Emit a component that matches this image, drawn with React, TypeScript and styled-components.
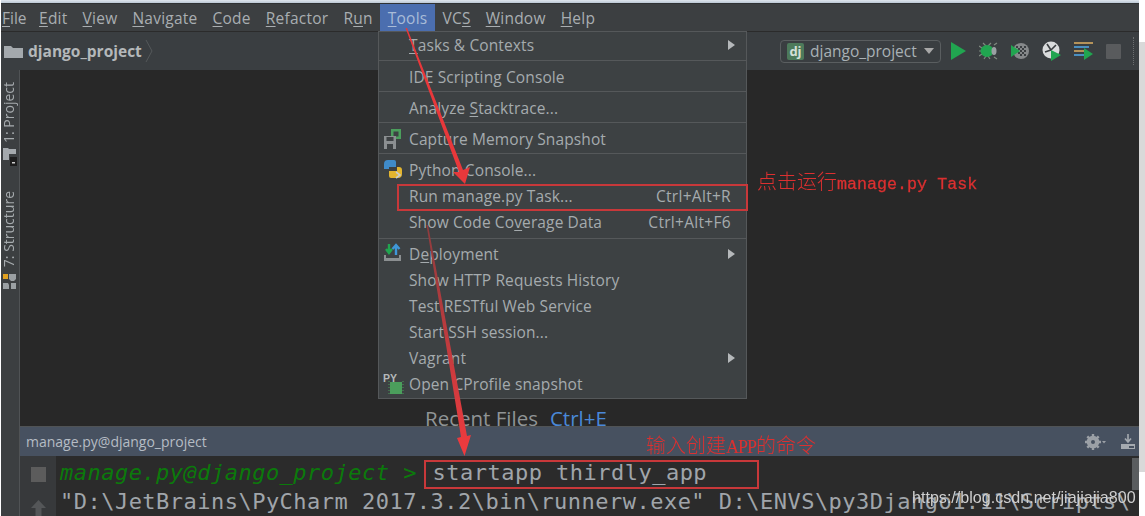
import React from 'react';
import styled, { createGlobalStyle } from 'styled-components';

const uiFont = `"Open Sans", "Noto Sans", sans-serif`;
const cjkFont = `"Noto Sans CJK SC", sans-serif`;

const GlobalStyle = createGlobalStyle`
  html, body {
    margin: 0;
    padding: 0;
    background: #fff;
    overflow: hidden;
  }
`;

// Page frame
const Page = styled.div`
  position: relative;
  display: flex;
  width: 1145px;
  height: 516px;
  overflow: hidden;
  filter: blur(0.45px);
  font-family: ${uiFont};
`;

const Window = styled.div`
  display: flex;
  flex-direction: column;
  width: 1138px;
  margin-left: 1px;
  height: 516px;
  background: #3c3f41;
`;

const RightEdge = styled.div`
  display: flex;
  flex-direction: column;
  width: 6px;
  padding-top: 42px;
  background: #fff;
`;

const RightEdgeGrey = styled.div`
  height: 430px;
  background: #d9d9d9;
`;

const TopEdge = styled.div`
  height: 4px;
  background: linear-gradient(#dfe6ee, #bcc8d4);
  border-bottom: 1px solid #2f3234;
  box-sizing: border-box;
`;

// Menu bar
const MenuBar = styled.div`
  display: flex;
  height: 27px;
  background: #3c3f41;
  border-bottom: 1px solid #2b2b2b;
`;

const MenuItem = styled.div<{ $active?: boolean }>`
  display: flex;
  align-items: center;
  padding: 0 7.5px;
  height: 27px;
  font-size: 15.5px;
  letter-spacing: 0.24px;
  color: ${(p) => (p.$active ? '#a9bcd8' : '#a9aeb1')};
  background: ${(p) => (p.$active ? '#4b6eaf' : 'transparent')};
  white-space: pre;
  &:first-child {
    padding-left: 1px;
    padding-right: 5px;
    letter-spacing: 0;
  }
`;

const Key = styled.span`
  text-decoration: underline;
  text-underline-offset: 2px;
  text-decoration-thickness: 1px;
`;

// Navigation bar
const NavBar = styled.div`
  display: flex;
  align-items: center;
  height: 38px;
  padding: 0 4px 0 3px;
  background: #3a3e41;
`;

const Crumb = styled.span`
  margin-left: 5px;
  font-size: 15.5px;
  font-weight: 700;
  color: #b4b8ba;
`;

const RunConfig = styled.div`
  display: flex;
  align-items: center;
  width: 161px;
  height: 23px;
  box-sizing: border-box;
  margin-left: auto;
  padding: 0 6px;
  border: 1px solid #5a5e60;
  border-radius: 4px;
  font-size: 15.5px;
  color: #a9b1b5;
`;

const DjBadge = styled.span`
  display: flex;
  align-items: center;
  justify-content: center;
  width: 17px;
  height: 17px;
  margin-right: 6px;
  border-radius: 2px;
  background: #4d7a5b;
  color: #d5e0d8;
  font-size: 13px;
  font-weight: 700;
`;

const Caret = styled.span`
  margin-left: auto;
  width: 0;
  height: 0;
  border-left: 5px solid transparent;
  border-right: 5px solid transparent;
  border-top: 6px solid #a8a8a8;
`;

const Toolbar = styled.div`
  display: flex;
  align-items: center;
  gap: 13px;
  margin-left: 10px;
  margin-right: 12px;
`;

const Grip = styled.div`
  width: 1px;
  height: 28px;
  border-left: 1px dotted #6b6e70;
`;

// Main area
const Body = styled.div`
  display: flex;
  flex: 1;
  min-height: 0;
`;

const SideBar = styled.div`
  display: flex;
  flex-direction: column;
  align-items: center;
  width: 19px;
  padding: 12px 3px 0 0;
  box-sizing: border-box;
  background: #3c3f41;
  border-right: 1px solid #505355;
`;

const SideLabel = styled.div<{ $gap: number }>`
  writing-mode: vertical-rl;
  transform: rotate(180deg);
  font-size: 14px;
  line-height: 16px;
  color: #a6abae;
  margin-top: ${(p) => p.$gap}px;
  white-space: nowrap;
`;

const Main = styled.div`
  display: flex;
  flex-direction: column;
  flex: 1;
  min-width: 0;
`;

const Editor = styled.div`
  display: flex;
  flex: 1;
  align-items: flex-end;
  padding: 0 0 0 405px;
  background: #282828;
  border-bottom: 1px solid #505355;
`;

const Hint = styled.div`
  font-size: 20.5px;
  line-height: 24px;
  margin-bottom: -4px;
  color: #909496;
`;

const HintKey = styled.span`
  margin-left: 12px;
  color: #4a88d8;
`;

// Bottom tool window
const PanelHeader = styled.div`
  display: flex;
  align-items: center;
  height: 29px;
  padding: 0 4px 0 6px;
  background: #475160;
  font-size: 14px;
  color: #b5bcc4;
`;

const PanelTitle = styled.span`
  flex: 1;
`;

const PanelIcons = styled.div`
  display: flex;
  align-items: center;
  gap: 15px;
`;

const Console = styled.div`
  display: flex;
  height: 60px;
  background: #2b2b2b;
  overflow: hidden;
`;

const Gutter = styled.div`
  display: flex;
  flex-direction: column;
  align-items: center;
  gap: 18px;
  width: 36px;
  padding-top: 11px;
  box-sizing: border-box;
  background: #37393b;
`;

const StopSquare = styled.div`
  width: 15px;
  height: 15px;
  background: #5c5c5c;
`;

const Output = styled.div`
  flex: 1;
  min-width: 0;
  padding: 2px 0 0 4px;
  font-family: "DejaVu Sans Mono", monospace;
  font-size: 22px;
  line-height: 29px;
  letter-spacing: 0.48px;
  white-space: pre;
  color: #a0a5aa;
  overflow: hidden;
`;

const Prompt = styled.span`
  color: #0b7a0b;
  font-style: italic;
`;

const Command = styled.span`
  margin-left: 2px;
`;

const Scrollbar = styled.div`
  width: 7px;
  height: 32px;
  margin-top: 2px;
  background: #5a5d5f;
`;

// Tools menu
const Menu = styled.div`
  position: absolute;
  left: 378px;
  top: 31px;
  width: 369px;
  box-sizing: border-box;
  background: #3d4143;
  border: 1px solid #55585a;
  font-size: 15.5px;
  letter-spacing: 0.12px;
  color: #a5abae;
`;

const Group = styled.div<{ $pad?: string }>`
  padding: ${(p) => p.$pad || '3px 0 1px'};
  border-bottom: 1px solid #55585a;
  &:last-child {
    border-bottom: 0;
  }
`;

const Row = styled.div`
  position: relative;
  display: flex;
  align-items: center;
  height: 26px;
  padding: 0 15px 0 30px;
  white-space: pre;
`;

const RowIcon = styled.span`
  position: absolute;
  left: 4px;
  top: 2px;
  display: flex;
`;

const Shortcut = styled.span`
  margin-left: auto;
  letter-spacing: 0.3px;
`;

const SubArrow = styled.span`
  margin-left: auto;
  margin-right: -4px;
  width: 0;
  height: 0;
  border-top: 5.5px solid transparent;
  border-bottom: 5.5px solid transparent;
  border-left: 7px solid #b5b8ba;
`;

// Annotations painted over the screenshot
const Overlay = styled.svg`
  position: absolute;
  left: 0;
  top: 0;
  pointer-events: none;
`;

const RedBox = styled.div<{ $l: number; $t: number; $w: number; $h: number }>`
  position: absolute;
  left: ${(p) => p.$l}px;
  top: ${(p) => p.$t}px;
  width: ${(p) => p.$w}px;
  height: ${(p) => p.$h}px;
  box-sizing: border-box;
  border: 2px solid #c8383a;
`;

const Note = styled.div<{ $l: number; $t: number }>`
  position: absolute;
  left: ${(p) => p.$l}px;
  top: ${(p) => p.$t}px;
  display: flex;
  align-items: baseline;
  font-family: ${cjkFont};
  font-size: 20px;
  line-height: 26px;
  font-weight: 300;
  color: #dc3030;
  white-space: pre;
`;

const NoteMono = styled.span`
  font-family: "Liberation Mono", monospace;
  font-size: 16.7px;
  -webkit-text-stroke: 0.3px #dc3030;
`;

const NoteSerif = styled.span`
  font-family: "Liberation Serif", serif;
  font-size: 18px;
  letter-spacing: -1px;
`;

const Watermark = styled.div`
  position: absolute;
  left: 912px;
  top: 487px;
  font-family: "Liberation Sans", sans-serif;
  font-size: 16.1px;
  line-height: 20px;
  color: #cfcfcf;
  white-space: pre;
`;

// Drawn icons
const FolderIcon = () => (
  <svg width="19" height="13" viewBox="0 0 19 13">
    <path d="M0 1h7l2 2h10v10H0z" fill="#a4a9ad" />
  </svg>
);

const Chevron = () => (
  <svg width="8" height="24" viewBox="0 0 8 24" style={{ marginLeft: 3 }}>
    <path d="M1 1l6 11-6 11" fill="none" stroke="#54585a" strokeWidth="1" />
  </svg>
);

const PlayIcon = () => (
  <svg width="15" height="18" viewBox="0 0 15 18">
    <path d="M0 0l15 9-15 9z" fill="#21a550" />
  </svg>
);

const DebugIcon = () => (
  <svg width="19" height="18" viewBox="0 0 19 18">
    <g stroke="#7f8a80" strokeWidth="1.2" fill="none">
      <path d="M4 1l3 3M12 1l-3 3M0 9h3M0 4l3 2M0 14l3-2M5 17l2-3M11 17l-2-3M15 3l3-2M15 15l3 2" />
    </g>
    <ellipse cx="8" cy="9" rx="6.5" ry="6" fill="#21a550" />
    <path d="M12 5a5 5 0 0 1 0 8 5 5 0 0 0 0-8z" fill="#c9cccd" />
    <ellipse cx="15" cy="9" rx="2.5" ry="4" fill="#9aa0a3" />
  </svg>
);

const CoverageIcon = () => (
  <svg width="18" height="18" viewBox="0 0 18 18">
    <circle cx="10" cy="9" r="8" fill="#85888a" />
    <g fill="#3a3e41">
      <rect x="5" y="4" width="2" height="2" />
      <rect x="9" y="4" width="2" height="2" />
      <rect x="13" y="4" width="2" height="2" />
      <rect x="7" y="6" width="2" height="2" />
      <rect x="11" y="6" width="2" height="2" />
      <rect x="9" y="8" width="2" height="2" />
      <rect x="13" y="8" width="2" height="2" />
      <rect x="7" y="10" width="2" height="2" />
      <rect x="11" y="10" width="2" height="2" />
      <rect x="9" y="12" width="2" height="2" />
      <rect x="13" y="12" width="2" height="2" />
    </g>
    <path d="M0 3l9 6-9 6z" fill="#21a550" />
  </svg>
);

const ProfileIcon = () => (
  <svg width="19" height="20" viewBox="0 0 19 20">
    <circle cx="9" cy="9" r="8.5" fill="#d9dbdc" />
    <path d="M9 9L5 3M9 9l-6 2M9 9l5-5" stroke="#3a3e41" strokeWidth="1.6" />
    <path d="M9 9l0 11 10-6z" fill="#21a550" />
  </svg>
);

const ConcurrencyIcon = () => (
  <svg width="19" height="18" viewBox="0 0 19 18">
    <rect x="0" y="0" width="19" height="2" fill="#b5935a" />
    <rect x="0" y="4" width="15" height="2" fill="#4a8fc0" />
    <rect x="0" y="8" width="11" height="2" fill="#b5935a" />
    <rect x="0" y="12" width="11" height="2" fill="#4a8fc0" />
    <path d="M10 6l9 6-9 6z" fill="#21a550" />
  </svg>
);

const StopIcon = () => (
  <svg width="15" height="15" viewBox="0 0 15 15">
    <rect width="15" height="15" rx="1" fill="#595b5d" />
  </svg>
);

const ProjectToolIcon = () => (
  <svg width="15" height="18" viewBox="0 0 15 18" style={{ marginTop: 5, marginLeft: 3 }}>
    <path d="M0 0h5l1 1h7v5H6v6H0z" fill="#a4a9ad" />
    <rect x="7" y="9" width="7" height="9" fill="#1d1d1d" />
    <rect x="9" y="14" width="3" height="1.5" fill="#ccc" />
  </svg>
);

const StructureToolIcon = () => (
  <svg width="14" height="15" viewBox="0 0 14 15" style={{ marginTop: 7, marginLeft: 3 }}>
    <rect x="0" y="0" width="5" height="5" fill="#e0a020" />
    <path d="M6 0h7v5l-2 2H8L6 5zM0 9h5l1 2v4H0zM8 9h5v6H8z" fill="#9ba0a3" />
  </svg>
);

const SnapshotIcon = () => (
  <svg width="20" height="22" viewBox="0 0 20 22">
    <rect x="8" y="1" width="10" height="10" fill="#4b9e5c" />
    <rect x="10.5" y="3.5" width="5" height="5" fill="#3d4143" />
    <path d="M1 8h12v13H1z" fill="#8b8f91" />
    <rect x="3.5" y="9" width="7" height="4" fill="#3d4143" />
    <rect x="4" y="16" width="6" height="5" fill="#3d4143" />
  </svg>
);

const PythonIcon = () => (
  <svg width="20" height="20" viewBox="0 0 20 20">
    <path d="M5 1h6a2 2 0 0 1 2 2v5H6v2H1V5a4 4 0 0 1 4-4z" fill="#3f8bc9" />
    <path d="M14 8h2a3 3 0 0 1 3 3v4a4 4 0 0 1-4 4H8a2 2 0 0 1-2-2v-5h8z" fill="#e3b52f" />
    <path d="M13 13l4 3-4 3" fill="none" stroke="#c8ccce" strokeWidth="1.6" />
  </svg>
);

const DeployIcon = () => (
  <svg width="20" height="20" viewBox="0 0 20 20">
    <path d="M1 12v6h17v-6h-2v3H3v-3z" fill="#8b8f91" />
    <path d="M6 1v8M3 6l3 4 3-4" fill="none" stroke="#21a550" strokeWidth="2.4" />
    <path d="M13 12V3M9.5 6l3.500-4 3.500 4" fill="none" stroke="#3f97d8" strokeWidth="2.4" />
  </svg>
);

const PyChipIcon = () => (
  <svg width="22" height="22" viewBox="0 0 22 22">
    <text x="0" y="9" fontFamily="Liberation Sans" fontWeight="700" fontSize="10.5" fill="#b5b8ba">
      PY
    </text>
    <rect x="7" y="9" width="12" height="12" fill="#4b9e5c" />
    <g stroke="#4b9e5c" strokeWidth="1" strokeDasharray="1 2">
      <path d="M6 8v14M20 8v14" />
    </g>
  </svg>
);

const GearIcon = () => (
  <svg width="21" height="16" viewBox="0 0 21 16">
    <circle cx="8" cy="8" r="4.8" fill="none" stroke="#9ba0a6" strokeWidth="3" />
    <path d="M8 0v16M0 8h16M2.3 2.3l11.4 11.4M13.7 2.3L2.3 13.7" stroke="#9ba0a6" strokeWidth="2.4" />
    <circle cx="8" cy="8" r="2" fill="#475160" />
    <path d="M17 7h4l-2 2.500z" fill="#9ba0a6" />
  </svg>
);

const PinIcon = () => (
  <svg width="14" height="16" viewBox="0 0 14 16">
    <path d="M7 0v7M4 4.500L7 8l3-3.500" fill="none" stroke="#a5aab0" strokeWidth="1.6" />
    <rect x="0" y="10" width="14" height="5" fill="#a5aab0" />
    <rect x="8" y="12" width="5" height="2" fill="#475160" />
  </svg>
);

const UpArrow = () => (
  <svg width="15" height="16" viewBox="0 0 15 16">
    <path d="M7.500 0L15 8h-4.500v8h-6V8H0z" fill="#545658" />
  </svg>
);

const topMenus = [
  ['', 'F', 'ile'],
  ['', 'E', 'dit'],
  ['', 'V', 'iew'],
  ['', 'N', 'avigate'],
  ['', 'C', 'ode'],
  ['', 'R', 'efactor'],
  ['R', 'u', 'n'],
  ['', 'T', 'ools'],
  ['VC', 'S', ''],
  ['', 'W', 'indow'],
  ['', 'H', 'elp'],
];

export default function App() {
  return (
    <>
      <GlobalStyle />
      <Page>
        <Window>
          <TopEdge />
          <MenuBar>
            {topMenus.map(([before, key, after]) => (
              <MenuItem key={key + after} $active={key === 'T'}>
                {before}
                <Key>{key}</Key>
                {after}
              </MenuItem>
            ))}
          </MenuBar>

          <NavBar>
            <FolderIcon />
            <Crumb>django_project</Crumb>
            <Chevron />
            <RunConfig>
              <DjBadge>dj</DjBadge>
              django_project
              <Caret />
            </RunConfig>
            <Toolbar>
              <PlayIcon />
              <DebugIcon />
              <CoverageIcon />
              <ProfileIcon />
              <ConcurrencyIcon />
              <StopIcon />
            </Toolbar>
            <Grip />
          </NavBar>

          <Body>
            <SideBar>
              <SideLabel $gap={0}>1: Project</SideLabel>
              <ProjectToolIcon />
              <SideLabel $gap={25}>7: Structure</SideLabel>
              <StructureToolIcon />
            </SideBar>
            <Main>
              <Editor>
                <Hint>
                  Recent Files
                  <HintKey>Ctrl+E</HintKey>
                </Hint>
              </Editor>
              <PanelHeader>
                <PanelTitle>manage.py@django_project</PanelTitle>
                <PanelIcons>
                  <GearIcon />
                  <PinIcon />
                </PanelIcons>
              </PanelHeader>
              <Console>
                <Gutter>
                  <StopSquare />
                  <UpArrow />
                </Gutter>
                <Output>
                  <Prompt>manage.py@django_project &gt;</Prompt>{' '}
                  <Command>startapp thirdly_app</Command>
                  {'\n'}
                  {'"D:\\JetBrains\\PyCharm 2017.3.2\\bin\\runnerw.exe" D:\\ENVS\\py3Django1.11\\Scripts\\p'}
                </Output>
                <Scrollbar />
              </Console>
            </Main>
          </Body>
        </Window>
        <RightEdge>
          <RightEdgeGrey />
        </RightEdge>

        <Menu>
          <Group $pad="0 0 2px">
            <Row>
              <Key>T</Key>asks &amp; Contexts
              <SubArrow />
            </Row>
          </Group>
          <Group>
            <Row>IDE Scripting Console</Row>
          </Group>
          <Group>
            <Row>
              Analyze <Key>S</Key>tacktrace...
            </Row>
          </Group>
          <Group>
            <Row>
              <RowIcon>
                <SnapshotIcon />
              </RowIcon>
              Capture Memory Snapshot
            </Row>
          </Group>
          <Group $pad="3px 0">
            <Row>
              <RowIcon>
                <PythonIcon />
              </RowIcon>
              Python Console...
            </Row>
            <Row>
              Run manage.py Task...
              <Shortcut>Ctrl+Alt+R</Shortcut>
            </Row>
            <Row>
              Show Code Co<Key>v</Key>erage Data
              <Shortcut>Ctrl+Alt+F6</Shortcut>
            </Row>
          </Group>
          <Group $pad="2px 0 1px">
            <Row>
              <RowIcon>
                <DeployIcon />
              </RowIcon>
              D<Key>e</Key>ployment
              <SubArrow />
            </Row>
            <Row>Show HTTP Requests History</Row>
            <Row>Test RESTful Web Service</Row>
            <Row>Start SSH session...</Row>
            <Row>
              Vagrant
              <SubArrow />
            </Row>
            <Row>
              <RowIcon>
                <PyChipIcon />
              </RowIcon>
              Open CProfile snapshot
            </Row>
          </Group>
        </Menu>

        <RedBox $l={397} $t={184} $w={351} $h={27} />
        <RedBox $l={424} $t={460} $w={335} $h={29} />

        <Overlay width="1145" height="516" viewBox="0 0 1145 516">
          <defs>
            <linearGradient id="tail" x1="0" y1="0" x2="0" y2="1">
              <stop offset="0" stopColor="#8e3c3e" />
              <stop offset="1" stopColor="#f03a3e" />
            </linearGradient>
          </defs>
          <path d="M405.500 28L407 28 463 170 470 167 465 184 453 172 459 172z" fill="#e8383b" />
          <path d="M426.500 225L428 225 467 436 471 435 464.500 456 457 438 461 437z" fill="url(#tail)" />
        </Overlay>

        <Note $l={757} $t={168}>
          点击运行<NoteMono>manage.py Task</NoteMono>
        </Note>
        <Note $l={646} $t={432}>
          输入创建<NoteSerif>APP</NoteSerif>的命令
        </Note>
        <Watermark>https://blog.csdn.net/jiajiajia800</Watermark>
      </Page>
    </>
  );
}
